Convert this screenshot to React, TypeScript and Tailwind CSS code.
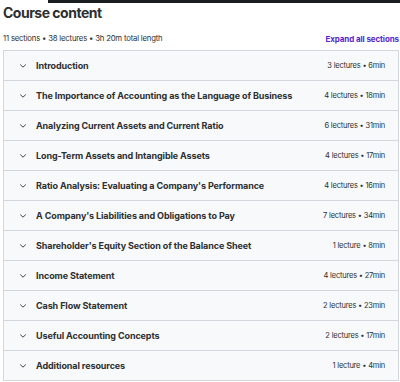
import React from 'react';

const sections = [
  { title: 'Introduction', meta: '3 lectures • 6min' },
  { title: 'The Importance of Accounting as the Language of Business', meta: '4 lectures • 18min' },
  { title: 'Analyzing Current Assets and Current Ratio', meta: '6 lectures • 31min' },
  { title: 'Long-Term Assets and Intangible Assets', meta: '4 lectures • 17min' },
  { title: "Ratio Analysis: Evaluating a Company's Performance", meta: '4 lectures • 16min' },
  { title: "A Company's Liabilities and Obligations to Pay", meta: '7 lectures • 34min' },
  { title: "Shareholder's Equity Section of the Balance Sheet", meta: '1 lecture • 8min' },
  { title: 'Income Statement', meta: '4 lectures • 27min' },
  { title: 'Cash Flow Statement', meta: '2 lectures • 23min' },
  { title: 'Useful Accounting Concepts', meta: '2 lectures • 17min' },
  { title: 'Additional resources', meta: '1 lecture • 4min' },
];

function Chevron() {
  return (
    <svg width="8" height="8" viewBox="0 0 8 8" className="shrink-0">
      <path d="M1.5 2.8 L4 5.2 L6.5 2.8" fill="none" stroke="#2d2f31" strokeWidth="0.9" strokeLinecap="round" strokeLinejoin="round" />
    </svg>
  );
}

export default function App() {
  return (
    <div className="w-[400px] h-[382px] overflow-hidden bg-white text-[#2d2f31]" style={{ fontFamily: 'Inter, "Noto Sans", sans-serif' }}>
      <div className="ml-[48px] h-[3px] bg-[#1c1d1f]" />
      <div className="pl-[3px] pr-[1px]">
        <h2 className="text-[14px] leading-[14px] font-bold tracking-[-0.5px] mt-[3px]">Course content</h2>
        <div className="flex items-center justify-between mt-[13px] h-[12px] text-[7.75px] tracking-[-0.2px]">
          <span>11 sections • 38 lectures • 3h 20m total length</span>
          <span className="font-bold text-[#5624d0] text-[8px] tracking-[-0.1px] whitespace-nowrap">Expand all sections</span>
        </div>
        <div className="mt-[5px] border border-[#d1d7dc] border-b-0">
          {sections.map((s) => (
            <div key={s.title} className="flex items-center h-[30px] bg-[#f7f9fa] border-b border-[#d1d7dc] pl-[15px] pr-[13px]">
              <Chevron />
              <span className="ml-[9px] font-bold text-[9px] tracking-[-0.1px] flex-1 whitespace-nowrap">{s.title}</span>
              <span className="text-[7.5px] tracking-[-0.2px] whitespace-nowrap">{s.meta}</span>
            </div>
          ))}
        </div>
      </div>
    </div>
  );
}
